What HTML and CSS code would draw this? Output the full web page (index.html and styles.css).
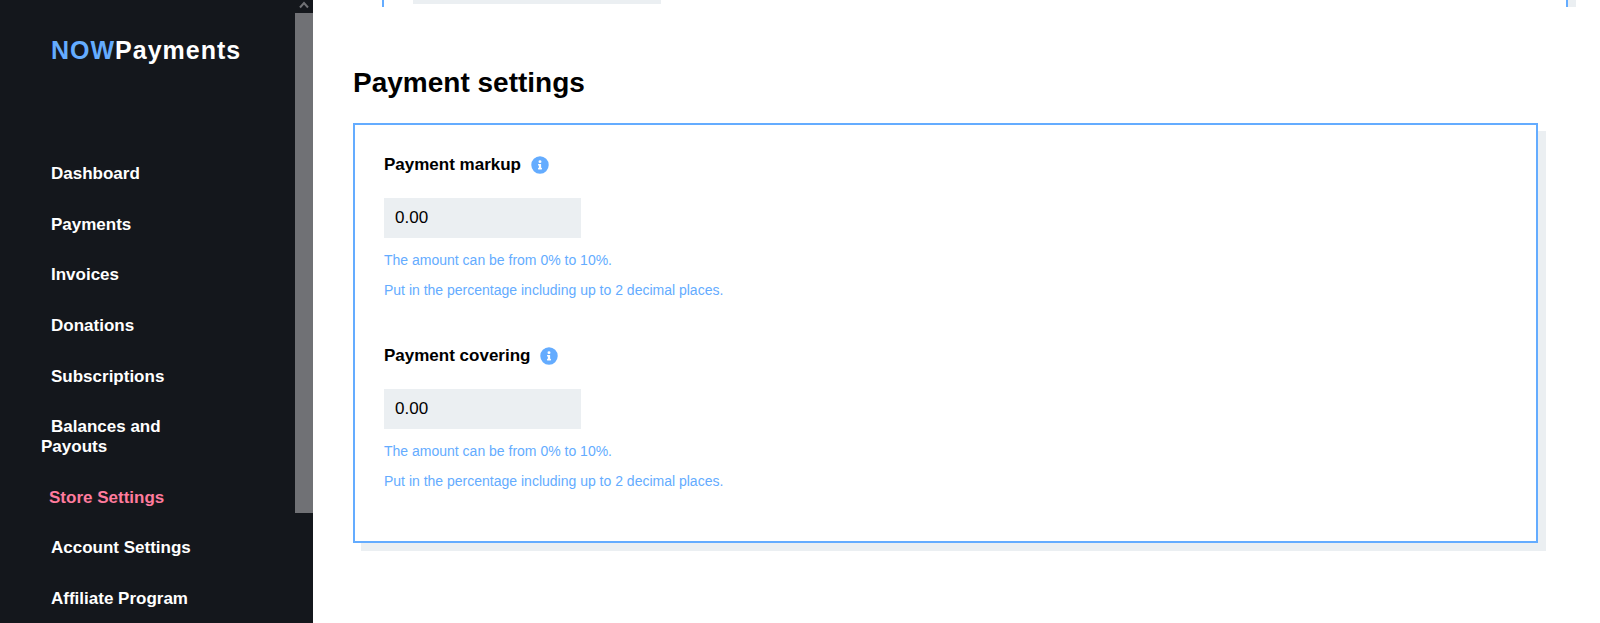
FILE: index.html
```html
<!DOCTYPE html>
<html lang="en">
  <head>
    <meta charset="UTF-8" />
    <meta name="viewport" content="width=device-width, initial-scale=1.0" />
    <title>NOWPayments - Store Settings</title>
    <link rel="stylesheet" href="styles.css" />
  </head>

  <body>
    <aside class="sidebar">
      <div class="sidebar-content">
        <a href="#" class="logo"><span>NOW</span>Payments</a>
        <nav class="menu">
          <a href="#">Dashboard</a>
          <a href="#">Payments</a>
          <a href="#">Invoices</a>
          <a href="#">Donations</a>
          <a href="#">Subscriptions</a>
          <a href="#">Balances and Payouts</a>
          <a href="#" class="active">Store Settings</a>
          <a href="#">Account Settings</a>
          <a href="#">Affiliate Program</a>
        </nav>
      </div>
      <div class="scrollbar">
        <svg class="scrollbar-arrow" viewBox="0 0 18 13" aria-hidden="true">
          <path d="M5 7.5 L9 3 L13 7.5" />
        </svg>
        <div class="scrollbar-thumb"></div>
      </div>
    </aside>

    <main>
      <div class="previous-card">
        <div class="previous-field"></div>
      </div>

      <section class="settings">
        <h2>Payment settings</h2>
        <form class="card">
          <div class="form-group">
            <div class="label-row">
              <label for="markup">Payment markup</label>
              <button type="button" class="info" aria-label="About payment markup">
                <svg viewBox="0 0 512 512" aria-hidden="true">
                  <path d="M256 8a248 248 0 1 0 0 496a248 248 0 1 0 0-496zm0 110a42 42 0 1 1 0 84a42 42 0 1 1 0-84zm56 254a12 12 0 0 1-12 12h-88a12 12 0 0 1-12-12v-24a12 12 0 0 1 12-12h12v-64h-12a12 12 0 0 1-12-12v-24a12 12 0 0 1 12-12h64a12 12 0 0 1 12 12v100h12a12 12 0 0 1 12 12z" fill-rule="evenodd" />
                </svg>
              </button>
            </div>
            <input type="text" id="markup" name="markup" value="0.00" />
            <p>The amount can be from 0% to 10%.</p>
            <p>Put in the percentage including up to 2 decimal places.</p>
          </div>

          <div class="form-group">
            <div class="label-row">
              <label for="covering">Payment covering</label>
              <button type="button" class="info" aria-label="About payment covering">
                <svg viewBox="0 0 512 512" aria-hidden="true">
                  <path d="M256 8a248 248 0 1 0 0 496a248 248 0 1 0 0-496zm0 110a42 42 0 1 1 0 84a42 42 0 1 1 0-84zm56 254a12 12 0 0 1-12 12h-88a12 12 0 0 1-12-12v-24a12 12 0 0 1 12-12h12v-64h-12a12 12 0 0 1-12-12v-24a12 12 0 0 1 12-12h64a12 12 0 0 1 12 12v100h12a12 12 0 0 1 12 12z" fill-rule="evenodd" />
                </svg>
              </button>
            </div>
            <input type="text" id="covering" name="covering" value="0.00" />
            <p>The amount can be from 0% to 10%.</p>
            <p>Put in the percentage including up to 2 decimal places.</p>
          </div>
        </form>
      </section>
    </main>
  </body>
</html>
```

FILE: styles.css
```css
* {
  box-sizing: border-box;
}

body {
  margin: 0;
  min-height: 100vh;
  display: flex;
  font-family: "Liberation Sans", Arial, sans-serif;
  font-size: 17px;
  line-height: 20px;
  color: #000;
  background-color: #fff;
}

h2,
p {
  margin: 0;
}

/* Sidebar */
.sidebar {
  flex: none;
  width: 313px;
  display: flex;
  background-color: #14171c;
}

.sidebar-content {
  flex: 1;
  display: flex;
  flex-direction: column;
  padding: 34px 40px 14px 41px;
}

.logo {
  margin-bottom: 98px;
  padding-left: 10px;
  font-size: 25px;
  line-height: 32px;
  font-weight: 700;
  letter-spacing: 1px;
  color: #fff;
  text-decoration: none;
}

.logo span {
  color: #64acff;
}

.menu {
  flex: 1;
  display: flex;
  flex-direction: column;
  justify-content: space-between;
  gap: 20px;
}

.menu a {
  width: 160px;
  text-indent: 10px;
  font-weight: 700;
  color: #fff;
  text-decoration: none;
}

.menu .active {
  text-indent: 8px;
  color: #ff7b9d;
}

.scrollbar {
  width: 18px;
}

.scrollbar-arrow {
  display: block;
  width: 18px;
  height: 13px;
  fill: none;
  stroke: #707175;
  stroke-width: 2;
}

.scrollbar-thumb {
  height: 500px;
  background-color: #707175;
}

/* Content */
main {
  flex: 1;
}

.previous-card {
  height: 7px;
  margin: 0 32px 0 69px;
  padding-left: 29px;
  border: solid #64acff;
  border-width: 0 2px;
  background-color: #fff;
  box-shadow: 8px 0 #ebeff2;
}

.previous-field {
  width: 248px;
  height: 4px;
  background-color: #ebeff2;
}

.settings {
  padding: 60px 62px 72px 40px;
}

.settings h2 {
  margin-bottom: 24px;
  font-size: 28px;
  line-height: 32px;
}

.card {
  display: flex;
  flex-direction: column;
  gap: 41px;
  padding: 30px 29px 45px;
  border: 2px solid #64acff;
  background-color: #fff;
  box-shadow: 8px 8px #ebeff2;
}

.label-row {
  display: flex;
  align-items: center;
  gap: 10px;
  margin-bottom: 23px;
}

label {
  font-weight: 700;
}

.info {
  display: flex;
  padding: 0;
  border: none;
  background: none;
  cursor: pointer;
}

.info svg {
  width: 18px;
  height: 18px;
  fill: #64acff;
}

input {
  display: block;
  width: 197px;
  height: 40px;
  margin-bottom: 7px;
  padding: 0 11px;
  border: none;
  font: inherit;
  color: #000;
  background-color: #ebeff2;
}

.form-group p {
  font-size: 14px;
  line-height: 30px;
  color: #64acff;
}
```
